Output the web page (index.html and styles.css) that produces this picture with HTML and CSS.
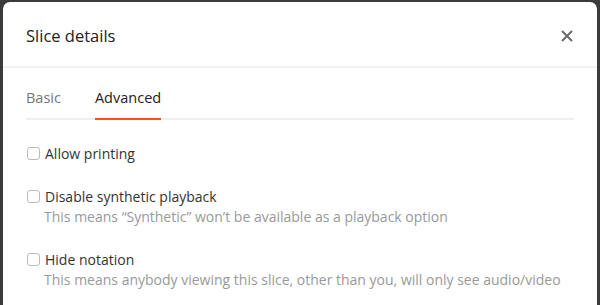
FILE: index.html
```html
<!DOCTYPE html>
<html>
<head>
<meta charset="utf-8">
<link rel="stylesheet" href="styles.css">
</head>
<body>
<div class="backdrop">
  <div class="modal">
    <div class="modal-header">
      <h2 class="title">Slice details</h2>
      <button class="close" aria-label="Close">
        <svg width="12" height="12" viewBox="0 0 12 12"><path d="M1 1L11 11M11 1L1 11" stroke="#6b6b6b" stroke-width="2" fill="none"/></svg>
      </button>
    </div>
    <div class="modal-body">
      <div class="tabs">
        <div class="tab">Basic</div>
        <div class="tab active">Advanced</div>
      </div>
      <div class="options">
        <label class="option">
          <span class="row"><span class="box"></span><span class="label">Allow printing</span></span>
        </label>
        <label class="option">
          <span class="row"><span class="box"></span><span class="label">Disable synthetic playback</span></span>
          <span class="desc">This means “Synthetic” won’t be available as a playback option</span>
        </label>
        <label class="option">
          <span class="row"><span class="box"></span><span class="label">Hide notation</span></span>
          <span class="desc">This means anybody viewing this slice, other than you, will only see audio/video</span>
        </label>
      </div>
    </div>
  </div>
</div>
</body>
</html>
```
FILE: styles.css
```css
* { box-sizing: border-box; }
html, body { margin: 0; padding: 0; height: 100%; }
body { background: #3b3b3b; font-family: "Open Sans", "Noto Sans", sans-serif; overflow: hidden; }
.backdrop { padding: 2px 3px 0 3px; height: 100%; }
.modal { background: #fff; border-radius: 7px 7px 0 0; height: 100%; }
.modal-header { height: 66px; display: flex; align-items: center; justify-content: space-between; padding: 4px 25px 0 23px; border-bottom: 2px solid #f2f2f2; }
.title { margin: 0; font-size: 16.5px; font-weight: 400; color: #222; line-height: 20px; }
.close { background: none; border: 0; padding: 0; width: 12px; height: 12px; display: flex; margin-right: -1px; }
.modal-body { padding: 0 23px; }
.tabs { display: flex; gap: 34px; border-bottom: 2px solid #f0f0f0; height: 52px; }
.tab { font-size: 14.5px; color: #777; padding-top: 20px; }
.tab.active { color: #222; border-bottom: 2px solid #ff4a1c; margin-bottom: -2px; }
.options { padding-top: 24px; display: flex; flex-direction: column; gap: 24px; }
.option { display: flex; flex-direction: column; }
.row { display: flex; align-items: center; gap: 5px; height: 19px; }
.box { width: 13px; height: 13px; border: 1px solid #bbb; border-radius: 3px; margin-left: 1px; }
.label { font-size: 14px; color: #333; line-height: 19px; }
.desc { margin-left: 18px; margin-top: 1px; font-size: 14px; line-height: 19px; color: #999; }
```
